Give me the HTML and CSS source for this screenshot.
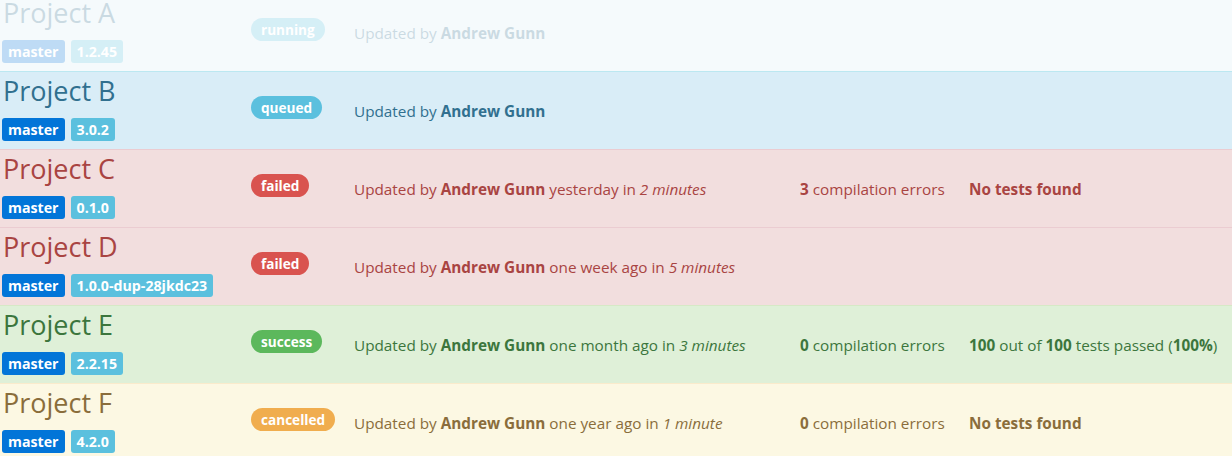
FILE: index.html
```html
<!DOCTYPE html>
<html>
<head>
<meta charset="utf-8">
<link rel="stylesheet" href="styles.css">
</head>
<body>
<div class="list">
  <div class="row info faded">
    <div class="name">
      <div class="title">Project A</div>
      <div class="tags"><span class="tag branch">master</span><span class="tag version">1.2.45</span></div>
    </div>
    <div class="status"><span class="pill running">running</span></div>
    <div class="updated">Updated by <b>Andrew Gunn</b></div>
  </div>
  <div class="row info">
    <div class="name">
      <div class="title">Project B</div>
      <div class="tags"><span class="tag branch">master</span><span class="tag version">3.0.2</span></div>
    </div>
    <div class="status"><span class="pill queued">queued</span></div>
    <div class="updated">Updated by <b>Andrew Gunn</b></div>
  </div>
  <div class="row danger">
    <div class="name">
      <div class="title">Project C</div>
      <div class="tags"><span class="tag branch">master</span><span class="tag version">0.1.0</span></div>
    </div>
    <div class="status"><span class="pill failed">failed</span></div>
    <div class="updated">Updated by <b>Andrew Gunn</b> yesterday in <em>2 minutes</em></div>
    <div class="errors"><b>3</b> compilation errors</div>
    <div class="tests"><b>No tests found</b></div>
  </div>
  <div class="row danger">
    <div class="name">
      <div class="title">Project D</div>
      <div class="tags"><span class="tag branch">master</span><span class="tag version">1.0.0-dup-28jkdc23</span></div>
    </div>
    <div class="status"><span class="pill failed">failed</span></div>
    <div class="updated">Updated by <b>Andrew Gunn</b> one week ago in <em>5 minutes</em></div>
  </div>
  <div class="row success">
    <div class="name">
      <div class="title">Project E</div>
      <div class="tags"><span class="tag branch">master</span><span class="tag version">2.2.15</span></div>
    </div>
    <div class="status"><span class="pill passed">success</span></div>
    <div class="updated">Updated by <b>Andrew Gunn</b> one month ago in <em>3 minutes</em></div>
    <div class="errors"><b>0</b> compilation errors</div>
    <div class="tests"><b>100</b> out of <b>100</b> tests passed (<b>100%</b>)</div>
  </div>
  <div class="row warning">
    <div class="name">
      <div class="title">Project F</div>
      <div class="tags"><span class="tag branch">master</span><span class="tag version">4.2.0</span></div>
    </div>
    <div class="status"><span class="pill cancelled">cancelled</span></div>
    <div class="updated">Updated by <b>Andrew Gunn</b> one year ago in <em>1 minute</em></div>
    <div class="errors"><b>0</b> compilation errors</div>
    <div class="tests"><b>No tests found</b></div>
  </div>
</div>
</body>
</html>
```

FILE: styles.css
```css
html, body {
  margin: 0;
  padding: 0;
  background: #fff;
  overflow: hidden;
}
body {
  font-family: "Open Sans", "Noto Sans", sans-serif;
  font-size: 15.3px;
}
.list {
  margin-top: -7px;
}
.row {
  display: flex;
  align-items: center;
  height: 77px;
  border-top: 1px solid transparent;
  box-sizing: content-box;
}
.faded {
  opacity: 0.25;
}
.info { background: #d9edf7; color: #31708f; border-top-color: #bce8f1; }
.danger { background: #f2dede; color: #a94442; border-top-color: #ebccd1; }
.success { background: #dff0d8; color: #3c763d; border-top-color: #d6e9c6; }
.warning { background: #fcf8e3; color: #8a6d3b; border-top-color: #faebcc; }

.name {
  width: 248px;
  padding-left: 3px;
  align-self: flex-start;
  padding-top: 3px;
}
.title {
  font-size: 27px;
  line-height: 32px;
  white-space: nowrap;
}
.tags {
  display: flex;
  gap: 6px;
  margin-left: -1px;
  margin-top: 11px;
}
.tag {
  display: inline-block;
  color: #fff;
  font-weight: 700;
  font-size: 14.2px;
  line-height: 23px;
  padding: 0 6px;
  border-radius: 3px;
}
.branch { background: #0275d8; }
.version { background: #5bc0de; }

.status {
  width: 103px;
  margin-top: -6px;
}
.pill {
  display: inline-block;
  color: #fff;
  font-weight: 700;
  font-size: 13.6px;
  line-height: 23px;
  padding: 0 10px;
  border-radius: 12px;
}
.running, .queued { background: #5bc0de; }
.failed { background: #d9534f; }
.passed { background: #5cb85c; }
.cancelled { background: #f0ad4e; }

.updated {
  width: 446px;
  white-space: nowrap;
}
.errors {
  width: 169px;
  white-space: nowrap;
}
.tests {
  flex: 1;
  white-space: nowrap;
}
b { font-weight: 700; }
```
